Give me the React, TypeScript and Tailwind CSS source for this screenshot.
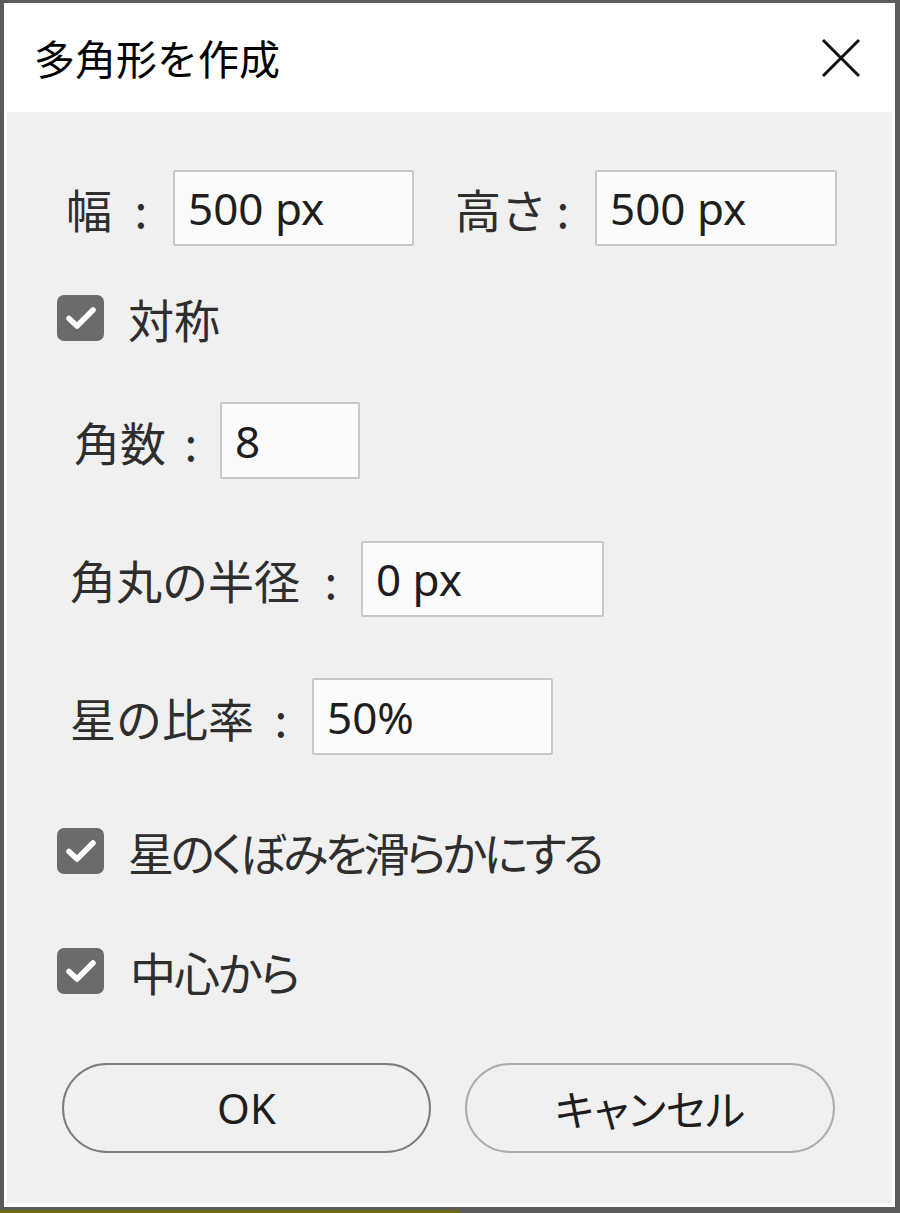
import React from "react";

const JP = "font-['Noto_Sans_CJK_JP','Noto_Sans',sans-serif]";
const LAT = "font-['Noto_Sans','Noto_Sans_CJK_JP',sans-serif]";

function Field({ value, w, ml }: { value: string; w: string; ml: string }) {
  return (
    <div
      className={`${ml} ${w} h-full flex items-center pl-[13px] bg-[#fbfbfb] border-2 border-[#c8c8c8] rounded-[2px] ${LAT} text-[44px] leading-none text-[#1e1e1e]`}
    >
      {value}
    </div>
  );
}

function Check() {
  return (
    <div className="w-[47px] h-[46px] rounded-[7px] bg-[#6b6b6b] flex items-center justify-center shrink-0">
      <svg width="32" height="26" viewBox="0 0 32 26">
        <path d="M4 13.5 L12 21 L28 5" fill="none" stroke="#ffffff" strokeWidth="5.5" strokeLinecap="round" strokeLinejoin="round" />
      </svg>
    </div>
  );
}

function Colon({ ml }: { ml: string }) {
  return <span className={`${ml} inline-block w-[30px] text-center`}>:</span>;
}

export default function App() {
  return (
    <div className="w-[900px] h-[1213px] flex flex-col bg-[#5c5c5c]">
      <div className="flex-1 flex flex-col mt-[3px] ml-[4px] mr-[5px] mb-[3px] border-x-[3px] border-b-[4px] border-white">
        {/* title bar */}
        <div className="h-[109px] bg-white flex items-center justify-between pl-[27px] pr-[30px]">
          <span className={`${JP} text-[41px] leading-none text-black`}>多角形を作成</span>
          <svg width="40" height="40" viewBox="0 0 40 40" className="mr-[1px]">
            <path d="M2 2 L38 38 M38 2 L2 38" stroke="#111" strokeWidth="3" />
          </svg>
        </div>
        {/* content */}
        <div className={`flex-1 bg-[#f0f0f0] flex flex-col ${JP} text-[46px] leading-none text-[#2e2e2e]`}>
          {/* row 1 */}
          <div className="mt-[58px] h-[76px] flex items-center ml-[59px]">
            <span>幅</span>
            <Colon ml="ml-[14px]" />
            <Field value="500 px" w="w-[241px]" ml="ml-[17px]" />
            <span className="ml-[41px]">高さ</span>
            <Colon ml="ml-[1px]" />
            <Field value="500 px" w="w-[242px]" ml="ml-[17px]" />
          </div>
          {/* 対称 */}
          <div className="mt-[49px] h-[46px] flex items-center ml-[50px]">
            <Check />
            <span className="ml-[24px]">対称</span>
          </div>
          {/* 角数 */}
          <div className="mt-[61px] h-[77px] flex items-center ml-[67px]">
            <span>角数</span>
            <Colon ml="ml-[10px]" />
            <Field value="8" w="w-[140px]" ml="ml-[14px]" />
          </div>
          {/* 角丸の半径 */}
          <div className="mt-[62px] h-[76px] flex items-center ml-[63px]">
            <span>角丸の半径</span>
            <Colon ml="ml-[16px]" />
            <Field value="0 px" w="w-[243px]" ml="ml-[15px]" />
          </div>
          {/* 星の比率 */}
          <div className="mt-[61px] h-[77px] flex items-center ml-[63px]">
            <span>星の比率</span>
            <Colon ml="ml-[12px]" />
            <Field value="50%" w="w-[241px]" ml="ml-[16px]" />
          </div>
          {/* checkbox 2 */}
          <div className="mt-[73px] h-[46px] flex items-center ml-[50px]">
            <Check />
            <span className="ml-[24px] [font-feature-settings:'palt'] tracking-[-3.5px]">星のくぼみを滑らかにする</span>
          </div>
          {/* checkbox 3 */}
          <div className="mt-[74px] h-[46px] flex items-center ml-[50px]">
            <Check />
            <span className="ml-[26px] [font-feature-settings:'palt'] tracking-[-2px]">中心から</span>
          </div>
          {/* buttons */}
          <div className="mt-[69px] h-[90px] flex ml-[55px]">
            <div className={`w-[369px] h-full rounded-full border-2 border-[#7c7c7c] flex items-center justify-center ${LAT} text-[42px] text-[#1e1e1e]`}>
              OK
            </div>
            <div className="ml-[34px] w-[370px] h-full rounded-full border-2 border-[#adadad] flex items-center justify-center text-[42px] text-[#1e1e1e] [font-feature-settings:'palt']">
              キャンセル
            </div>
          </div>
        </div>
      </div>
      <div className="h-[3px] flex">
        <div className="w-[460px] bg-[#6e6a14]" />
        <div className="flex-1 bg-[#5c5c5c]" />
      </div>
    </div>
  );
}
